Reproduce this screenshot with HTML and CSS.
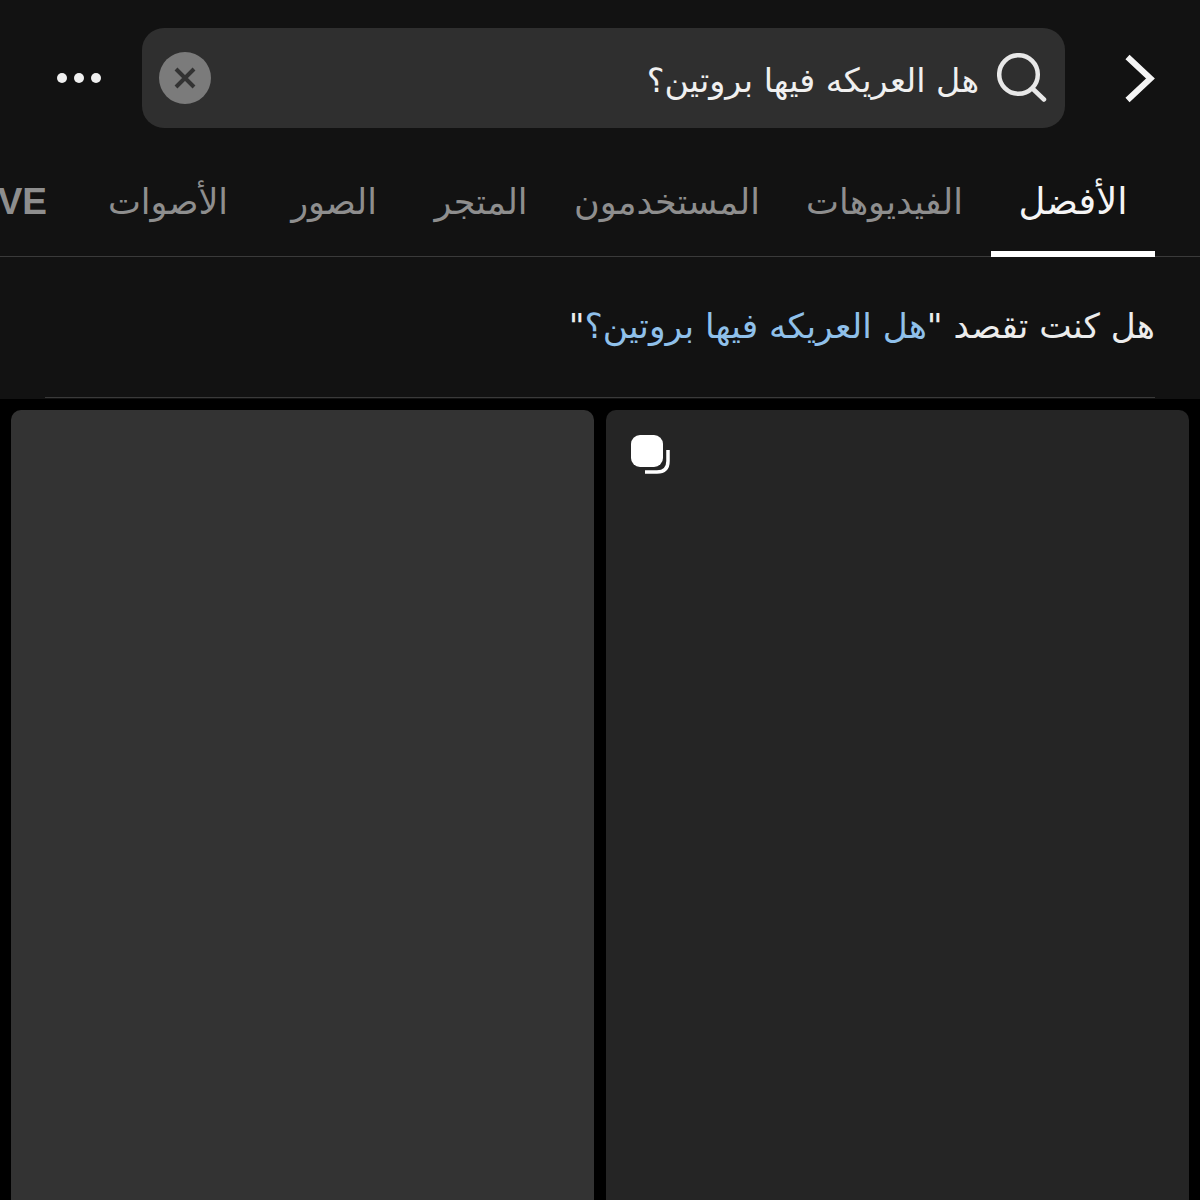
FILE: index.html
```html
<!DOCTYPE html>
<html lang="ar" dir="rtl">
<head>
    <meta charset="UTF-8">
    <meta name="viewport" content="width=device-width, initial-scale=1.0">
    <title>بحث</title>
    <link rel="stylesheet" href="styles.css">
</head>
<body>
    <header class="top">
        <div class="search-row">
            <svg class="back" width="32" height="50" viewBox="0 0 32 50">
                <path d="M3.5 4 L26.5 25.5 L3.5 47" fill="none" stroke="#f5f5f5" stroke-width="6"/>
            </svg>
            <div class="search-box">
                <svg class="search-icon" width="50" height="50" viewBox="0 0 50 50">
                    <circle cx="21.5" cy="21.5" r="19.3" fill="none" stroke="#e8e8e8" stroke-width="4.5"/>
                    <path d="M36 36 L47 46.5" fill="none" stroke="#e8e8e8" stroke-width="4.5" stroke-linecap="round"/>
                </svg>
                <span class="query">هل العريكه فيها بروتين؟</span>
                <span class="clear">
                    <svg width="22" height="22" viewBox="0 0 22 22">
                        <path d="M2 2 L20 20 M20 2 L2 20" fill="none" stroke="#333" stroke-width="4"/>
                    </svg>
                </span>
            </div>
            <div class="more"><i></i><i></i><i></i></div>
        </div>
        <nav class="tabs">
            <a class="tab active">الأفضل</a>
            <a class="tab tab-videos">الفيديوهات</a>
            <a class="tab tab-users">المستخدمون</a>
            <a class="tab tab-shop">المتجر</a>
            <a class="tab tab-photos">الصور</a>
            <a class="tab tab-sounds">الأصوات</a>
            <a class="tab live">LIVE</a>
        </nav>
        <div class="suggest">
            <p>هل كنت تقصد "<span class="link">هل العريكه فيها بروتين؟</span>"</p>
        </div>
    </header>
    <main class="grid">
        <div class="card card-dark">
            <svg class="stack" width="40" height="40" viewBox="0 0 40 40">
                <rect x="1" y="0" width="32" height="32" rx="9" fill="#fff"/>
                <path d="M38 15 V26 Q38 37 27 37 H15" fill="none" stroke="#fff" stroke-width="3.5"/>
            </svg>
        </div>
        <div class="card card-light"></div>
    </main>
</body>
</html>
```

FILE: styles.css
```css
* {
    box-sizing: border-box;
}
html, body {
    height: 100%;
}
body {
    margin: 0;
    background: #000;
    font-family: "DejaVu Sans", "Noto Sans", sans-serif;
    overflow: hidden;
}
.top {
    background: #121212;
    height: 399px;
}
.search-row {
    display: flex;
    align-items: center;
    height: 156px;
    padding: 0 44px 0 44px;
}
.back {
    flex: none;
    margin-left: 59px;
}
.search-box {
    flex: none;
    width: 923px;
    height: 100px;
    background: #2f2f2f;
    border-radius: 22px;
    display: flex;
    align-items: center;
    padding: 0 18px 0 17px;
}
.search-icon {
    flex: none;
    margin-left: 18px;
}
.query {
    flex: 1;
    color: #f0f0f0;
    font-size: 33.4px;
    padding-top: 4px;
}
.clear {
    flex: none;
    width: 52px;
    height: 52px;
    border-radius: 50%;
    background: #7b7b7b;
    display: flex;
    align-items: center;
    justify-content: center;
}
.more {
    flex: none;
    display: flex;
    gap: 7px;
    margin-right: 41px;
}
.more i {
    display: block;
    width: 10px;
    height: 10px;
    border-radius: 50%;
    background: #f0f0f0;
}
.tabs {
    display: flex;
    height: 101px;
    padding-right: 45px;
    background: linear-gradient(#3a3a3a, #3a3a3a) bottom / 100% 1px no-repeat;
    overflow: hidden;
}
.tab {
    flex: none;
    height: 101px;
    padding-bottom: 10px;
    display: flex;
    align-items: center;
    justify-content: center;
    color: #8e8e8e;
    font-size: 35px;
}
.tab.active {
    width: 164px;
    color: #f5f5f5;
    font-size: 37px;
    border-bottom: 6px solid #fff;
    padding-bottom: 4px;
}
.tab-videos { width: 213px; }
.tab-users { width: 222px; }
.tab-shop { width: 150px; }
.tab-photos { width: 144px; }
.tab-sounds { width: 188px; }
.tab.live {
    padding-right: 27px;
    font-family: "Liberation Sans", sans-serif;
    font-weight: bold;
    font-size: 37px;
}
.suggest {
    margin: 0 45px;
    height: 141px;
    border-bottom: 1px solid #3a3a3a;
    padding-top: 44px;
}
.suggest p {
    margin: 0;
    color: #ececec;
    font-size: 34.4px;
    line-height: 50px;
}
.link {
    color: #8fc0ea;
}
.grid {
    display: grid;
    grid-template-columns: 1fr 1fr;
    gap: 12px;
    padding: 11px 11px 0;
    height: 801px;
}
.card {
    border-radius: 10px 10px 0 0;
    height: 800px;
    padding: 25px 24px;
    display: flex;
    justify-content: flex-end;
    align-items: flex-start;
}
.card-dark {
    background: #252525;
}
.card-light {
    background: #333;
}
```
